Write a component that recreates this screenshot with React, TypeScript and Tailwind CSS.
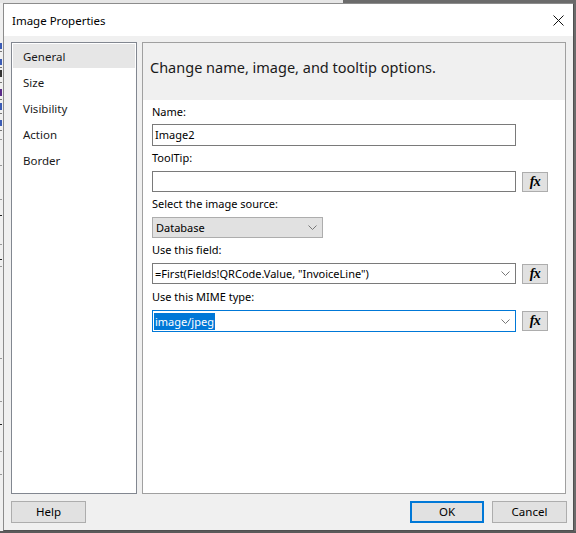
import React from "react";

function Chevron() {
  return (
    <svg width="9" height="5" viewBox="0 0 9 5" className="block">
      <polyline points="0.5,0.5 4.5,4.5 8.5,0.5" fill="none" stroke="#777" strokeWidth="1" />
    </svg>
  );
}

function FxButton() {
  return (
    <div className="ml-[6px] w-[26px] h-[20px] border border-[#adadad] bg-[#e1e1e1] flex items-center justify-center">
      <span className="font-['Liberation_Serif',serif] italic font-bold text-[14px] leading-none text-black tracking-[-0.5px]">
        fx
      </span>
    </div>
  );
}

function Label({ children }: { children: React.ReactNode }) {
  return <div className="h-[16px] leading-[16px] text-black">{children}</div>;
}

function LeftStrip() {
  const marks: { h: number; c: string; gap: number }[] = [
    { gap: 40, h: 6, c: "bg-[#3b5bb5]" },
    { gap: 2, h: 1, c: "bg-[#777]" },
    { gap: 7, h: 6, c: "bg-[#3b5bb5]" },
    { gap: 2, h: 1, c: "bg-[#777]" },
    { gap: 2, h: 7, c: "bg-[#333]" },
    { gap: 5, h: 1, c: "bg-[#777]" },
    { gap: 6, h: 7, c: "bg-[#5a2a8a]" },
    { gap: 3, h: 1, c: "bg-[#777]" },
    { gap: 3, h: 7, c: "bg-[#3b5bb5]" },
    { gap: 3, h: 1, c: "bg-[#777]" },
    { gap: 6, h: 6, c: "bg-[#3b5bb5]" },
    { gap: 4, h: 1, c: "bg-[#777]" },
    { gap: 8, h: 1, c: "bg-[#999]" },
    { gap: 25, h: 1, c: "bg-[#999]" },
    { gap: 33, h: 1, c: "bg-[#999]" },
    { gap: 15, h: 1, c: "bg-[#222]" },
    { gap: 28, h: 1, c: "bg-[#999]" },
    { gap: 14, h: 1, c: "bg-[#222]" },
    { gap: 6, h: 1, c: "bg-[#999]" },
    { gap: 91, h: 1, c: "bg-[#999]" },
    { gap: 42, h: 1, c: "bg-[#999]" },
    { gap: 22, h: 1, c: "bg-[#222]" },
    { gap: 26, h: 1, c: "bg-[#999]" },
    { gap: 22, h: 1, c: "bg-[#999]" },
  ];
  return (
    <div className="w-[3px] bg-[#f0f0f0] flex flex-col">
      {marks.map((m, i) => (
        <div key={i} className={`${m.c} w-[2px] shrink-0`} style={{ marginTop: m.gap, height: m.h }} />
      ))}
    </div>
  );
}

export default function App() {
  const nav = ["General", "Size", "Visibility", "Action", "Border"];
  return (
    <div className="w-[576px] h-[533px] flex flex-col bg-[#6b6b6b] overflow-hidden font-['Noto_Sans',sans-serif] text-[11px] text-black">
      <div className="h-[3px] flex shrink-0">
        <div className="w-[343px] bg-[#e6e6e6]" />
        <div className="flex-1 bg-[#6b6b6b]" />
      </div>
      <div className="flex h-[528px] shrink-0">
        <LeftStrip />
        <div className="w-[571px] h-[528px] flex flex-col border border-[#8c8c8c] border-r-[#505050] border-b-[#505050] bg-[#f0f0f0]">
          {/* title bar */}
          <div className="h-[32px] bg-white flex items-center justify-between pl-[8px] pr-[9px] pt-[2px]">
            <span className="text-[11.5px] leading-[16px]">Image Properties</span>
            <svg width="11" height="11" viewBox="0 0 11 11" className="block -mt-[1px]">
              <path d="M0.5 0.5 L10.5 10.5 M10.5 0.5 L0.5 10.5" stroke="#111" strokeWidth="1" />
            </svg>
          </div>
          {/* body */}
          <div className="flex-1 flex flex-col pt-[6px] pb-[7px] pl-[7px] pr-[6px]">
            <div className="h-[452px] flex gap-[5px]">
              {/* nav */}
              <div className="w-[126px] border border-[#828790] bg-white p-[1px]">
                {nav.map((n, i) => (
                  <div
                    key={n}
                    className={`h-[24px] mb-[2px] pl-[10px] flex items-center text-[11.5px] text-[#1a1a1a] ${
                      i === 0 ? "bg-[#e6e6e6]" : ""
                    }`}
                  >
                    <span className="pt-[2px]">{n}</span>
                  </div>
                ))}
              </div>
              {/* right panel */}
              <div className="w-[424px] border border-[#a0a0a0] bg-white flex flex-col">
                <div className="h-[57px] bg-[#f0f0f0] pl-[7px] pt-[14px]">
                  <div className="text-[14.5px] leading-[20px] text-[#1a1a1a]">Change name, image, and tooltip options.</div>
                </div>
                <div className="pl-[9px] pt-[4px] flex flex-col">
                  <Label>Name:</Label>
                  <div className="mt-[4px] w-[364px] h-[22px] border border-[#7a7a7a] bg-white flex items-center pl-[2px]">
                    <span className="leading-[16px]">Image2</span>
                  </div>
                  <div className="mt-[4px]">
                    <Label>ToolTip:</Label>
                  </div>
                  <div className="mt-[5px] flex items-center">
                    <div className="w-[364px] h-[21px] border border-[#7a7a7a] bg-white" />
                    <FxButton />
                  </div>
                  <div className="mt-[4px]">
                    <Label>Select the image source:</Label>
                  </div>
                  <div className="mt-[5px] w-[171px] h-[21px] border border-[#adadad] bg-[#e1e1e1] flex items-center justify-between pl-[3px] pr-[5px]">
                    <span className="leading-[16px]">Database</span>
                    <Chevron />
                  </div>
                  <div className="mt-[4px]">
                    <Label>Use this field:</Label>
                  </div>
                  <div className="mt-[5px] flex items-center">
                    <div className="w-[364px] h-[21px] border border-[#7a7a7a] bg-white flex items-center justify-between pl-[2px] pr-[5px]">
                      <span className="leading-[16px]">=First(Fields!QRCode.Value, "InvoiceLine")</span>
                      <Chevron />
                    </div>
                    <FxButton />
                  </div>
                  <div className="mt-[5px]">
                    <Label>Use this MIME type:</Label>
                  </div>
                  <div className="mt-[5px] flex items-center">
                    <div className="w-[364px] h-[22px] border border-[#0078d7] bg-white flex items-center justify-between pl-[1px] pr-[5px]">
                      <span className="leading-[17px] bg-[#0078d7] text-white pl-[1px] pr-[1px]">image/jpeg</span>
                      <Chevron />
                    </div>
                    <FxButton />
                  </div>
                </div>
              </div>
            </div>
            {/* buttons */}
            <div className="mt-[7px] h-[22px] flex items-center text-[11.5px]">
              <div className="w-[75px] h-[22px] border border-[#adadad] bg-[#e1e1e1] flex items-center justify-center">
                Help
              </div>
              <div className="flex-1" />
              <div className="w-[74px] h-[22px] border-2 border-[#0078d7] bg-[#e1e1e1] flex items-center justify-center">
                OK
              </div>
              <div className="ml-[8px] w-[75px] h-[22px] border border-[#adadad] bg-[#e1e1e1] flex items-center justify-center">
                Cancel
              </div>
            </div>
          </div>
        </div>
        <div className="flex-1 bg-[#6b6b6b]" />
      </div>
      <div className="flex-1 bg-[#5a5a5a]" />
    </div>
  );
}
